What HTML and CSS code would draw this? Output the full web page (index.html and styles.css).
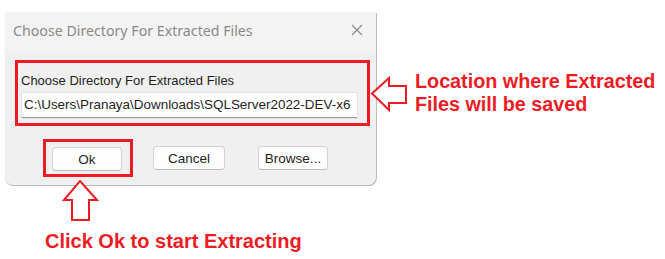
FILE: index.html
```html
<!DOCTYPE html>
<html>
<head>
<meta charset="utf-8">
<link rel="stylesheet" href="styles.css">
</head>
<body>
<div class="page">
  <div class="top">
    <div class="dialog">
      <div class="titlebar">
        <span class="title">Choose Directory For Extracted Files</span>
        <svg class="close" width="12" height="12" viewBox="0 0 12 12"><path d="M1 1L11 11M11 1L1 11" stroke="#8a8a8a" stroke-width="1.1" fill="none"/></svg>
      </div>
      <div class="body">
        <div class="hl field">
          <div class="label">Choose Directory For Extracted Files</div>
          <div class="input">C:\Users\Pranaya\Downloads\SQLServer2022-DEV-x6</div>
        </div>
        <div class="buttons">
          <div class="hl okwrap"><div class="btn">Ok</div></div>
          <div class="btn cancel">Cancel</div>
          <div class="btn browse">Browse...</div>
        </div>
      </div>
    </div>
    <div class="note-right">
      <svg class="arrow-left" width="40" height="36" viewBox="0 0 40 36"><path d="M2 17.5L19 2V10H36V27H19V34Z" fill="#fff" stroke="#ed1c24" stroke-width="2"/></svg>
      <div class="note-text">Location where Extracted<br>Files will be saved</div>
    </div>
  </div>
  <div class="bottom">
    <svg class="arrow-up" width="38" height="42" viewBox="0 0 38 42"><path d="M18 1L35 20H27V40H10V20H2Z" fill="#fff" stroke="#ed1c24" stroke-width="2"/></svg>
    <div class="caption">Click Ok to start Extracting</div>
  </div>
</div>
</body>
</html>
```

FILE: styles.css
```css
html, body {
  margin: 0;
  padding: 0;
  background: #ffffff;
}
.page {
  width: 665px;
  height: 259px;
  display: flex;
  flex-direction: column;
  overflow: hidden;
}
.top {
  display: flex;
  align-items: flex-start;
  padding-top: 12px;
  padding-left: 5px;
}
.dialog {
  width: 371px;
  height: 173px;
  background: #f0f0f0;
  border-radius: 0 0 8px 8px;
  box-shadow: 1px 1px 0 #bdbdbd, 0 1px 1px #cfcfcf;
  display: flex;
  flex-direction: column;
  box-sizing: border-box;
}
.titlebar {
  height: 38px;
  background: #f3f3f3;
  display: flex;
  align-items: center;
  justify-content: space-between;
  padding: 0 13px 0 8px;
}
.title {
  font-family: "Noto Sans", "Open Sans", sans-serif;
  font-size: 14.2px;
  color: #8a8a8a;
  margin-top: -2px;
}
.close {
  margin-top: -3px;
}
.body {
  padding: 10px 0 0 10px;
  display: flex;
  flex-direction: column;
}
.hl {
  border: 3px solid #ed1c24;
  box-sizing: border-box;
}
.field {
  width: 355px;
  height: 66px;
  padding: 10px 10px 0 3px;
}
.label {
  font-family: "Liberation Sans", Arial, sans-serif;
  font-size: 13px;
  color: #1e1e1e;
  line-height: 15px;
  height: 15px;
  margin-bottom: 5px;
}
.input {
  margin-left: 1px;
  height: 25px;
  width: 335px;
  box-sizing: border-box;
  background: #ffffff;
  border-bottom: 1px solid #9a9a9a;
  box-shadow: 0 0 0 1px #e4e4e4;
  font-family: "Liberation Sans", Arial, sans-serif;
  font-size: 13.45px;
  color: #1e1e1e;
  line-height: 23px;
  padding-left: 2px;
  white-space: nowrap;
  overflow: hidden;
}
.buttons {
  display: flex;
  align-items: center;
  margin-top: 13px;
  margin-left: 28px;
}
.okwrap {
  width: 90px;
  height: 38px;
  padding: 5px 0 0 6px;
}
.btn {
  width: 70px;
  height: 24px;
  box-sizing: border-box;
  background: #fdfdfd;
  border: 1px solid #d3d3d3;
  border-bottom-color: #bcbcbc;
  border-radius: 4px;
  font-family: "Liberation Sans", Arial, sans-serif;
  font-size: 13.5px;
  color: #1e1e1e;
  display: flex;
  align-items: center;
  justify-content: center;
}
.cancel {
  margin-left: 20px;
  width: 72px;
}
.browse {
  margin-left: 33px;
}
.note-right {
  display: flex;
  align-items: flex-start;
  margin-top: 64px;
  margin-left: -6px;
}
.arrow-left {
  display: block;
}
.note-text {
  margin-left: 5px;
  margin-top: -6px;
  font-family: "Liberation Sans", Arial, sans-serif;
  font-weight: bold;
  font-size: 19.75px;
  line-height: 23px;
  color: #ed1c24;
}
.bottom {
  display: flex;
  flex-direction: column;
}
.arrow-up {
  display: block;
  margin-left: 62px;
  margin-top: -5px;
}
.caption {
  margin-left: 45px;
  margin-top: 8px;
  font-family: "Liberation Sans", Arial, sans-serif;
  font-weight: bold;
  font-size: 20px;
  line-height: 22px;
  color: #ed1c24;
}
```
